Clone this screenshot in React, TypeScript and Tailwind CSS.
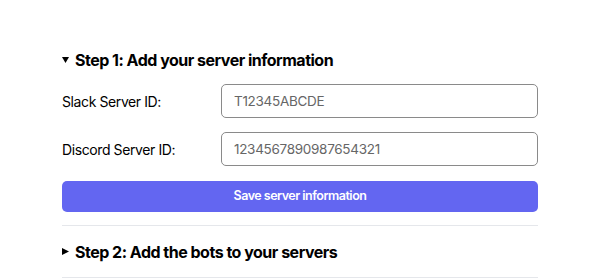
import React, { useState } from 'react';

function Caret({ open }: { open: boolean }) {
  return open ? (
    <svg width="7" height="6" viewBox="0 0 7 6" className="shrink-0">
      <path d="M0 0H7L3.5 6Z" fill="currentColor" />
    </svg>
  ) : (
    <svg width="7" height="7" viewBox="0 0 7 7" className="shrink-0">
      <path d="M0 0L7 3.5L0 7Z" fill="currentColor" />
    </svg>
  );
}

export default function App() {
  const [slackId, setSlackId] = useState('');
  const [discordId, setDiscordId] = useState('');

  return (
    <div className="min-h-screen bg-white font-['Inter',sans-serif] text-black">
      <div className="mx-auto w-[476px] pt-[48px]">
        {/* Step 1 */}
        <div className="pb-[13px]">
          <div className="flex h-[24px] items-center gap-[6px] text-[16px] font-bold tracking-[-0.5px]">
            <Caret open />
            <span>Step 1: Add your server information</span>
          </div>
          <form className="mt-[12px] flex flex-col" onSubmit={(e) => e.preventDefault()}>
            <div className="flex items-center">
              <label className="w-[159px] text-[14px] tracking-[-0.4px]">Slack Server ID:</label>
              <input
                className="h-[34px] flex-1 rounded-[5px] border border-[#8a8a8a] px-[12px] text-[13.5px] tracking-[-0.3px] text-gray-700 placeholder:text-[#666666] outline-none"
                placeholder="T12345ABCDE"
                value={slackId}
                onChange={(e) => setSlackId(e.target.value)}
              />
            </div>
            <div className="mt-[14px] flex items-center">
              <label className="w-[159px] text-[14px] tracking-[-0.4px]">Discord Server ID:</label>
              <input
                className="h-[34px] flex-1 rounded-[5px] border border-[#8a8a8a] px-[12px] text-[13.5px] tracking-[-0.3px] text-gray-700 placeholder:text-[#666666] outline-none"
                placeholder="1234567890987654321"
                value={discordId}
                onChange={(e) => setDiscordId(e.target.value)}
              />
            </div>
            <button
              type="submit"
              className="mt-[15px] h-[31px] w-full rounded-[5px] bg-[#6366f1] text-[12.5px] font-semibold tracking-[-0.5px] text-white"
            >
              Save server information
            </button>
          </form>
        </div>
        <div className="border-t border-[#e5e7eb]" />

        {/* Step 2 */}
        <div className="flex h-[51px] items-center gap-[6px] text-[16px] font-bold tracking-[-0.5px]">
          <Caret open={false} />
          <span>Step 2: Add the bots to your servers</span>
        </div>
        <div className="border-t border-[#e5e7eb]" />
      </div>
    </div>
  );
}
